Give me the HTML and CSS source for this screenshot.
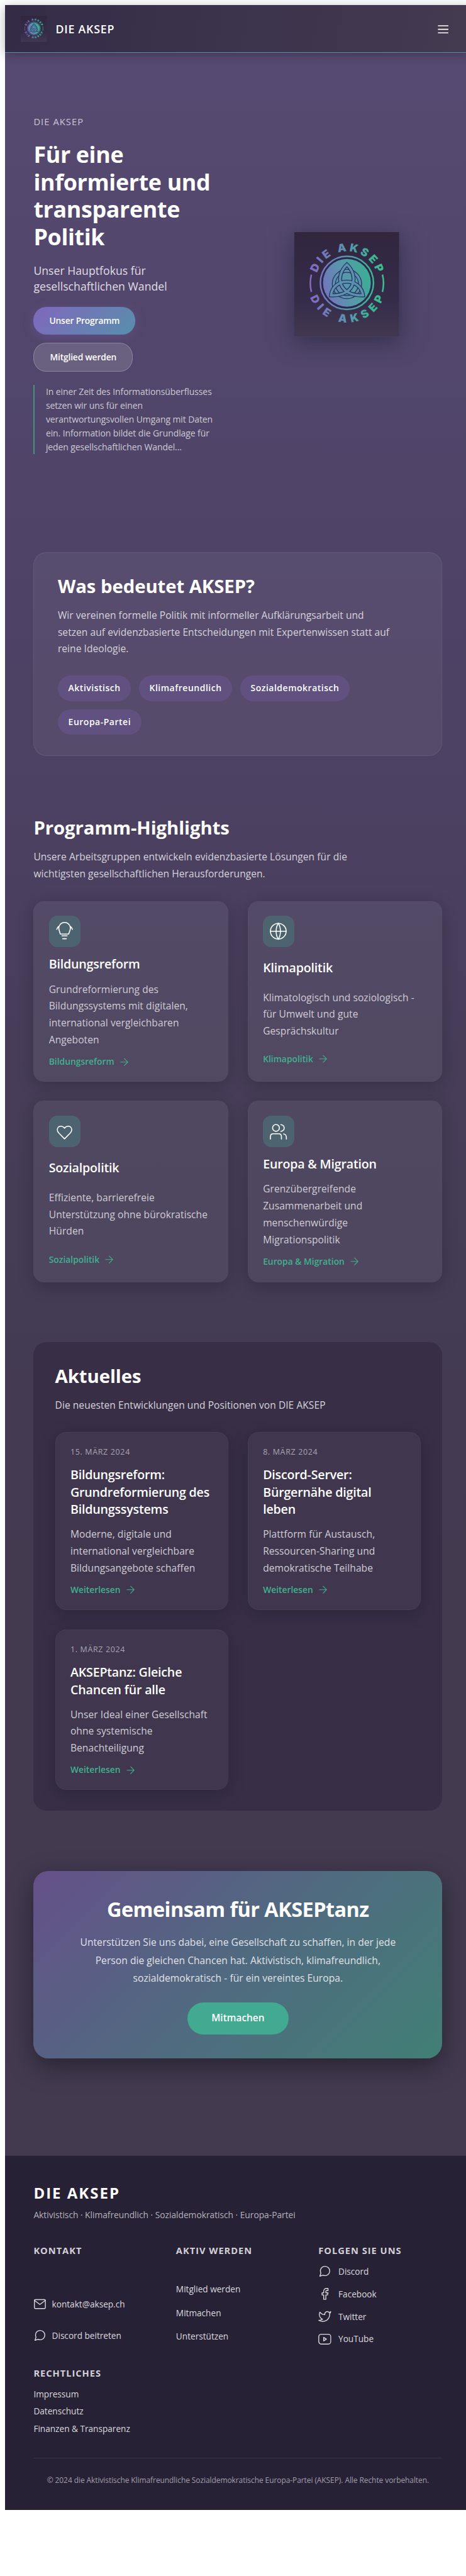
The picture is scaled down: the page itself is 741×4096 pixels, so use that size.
FILE: index.html
```html
<!DOCTYPE html>
<html lang="de">
<head>
<meta charset="utf-8">
<title>DIE AKSEP</title>
<link rel="stylesheet" href="styles.css">
</head>
<body>
<svg class="defs" aria-hidden="true">
  <defs>
    <linearGradient id="brand" gradientUnits="userSpaceOnUse" x1="30" y1="0" x2="170" y2="0">
      <stop offset="0" stop-color="#8569bf"/><stop offset=".5" stop-color="#5a93b0"/><stop offset=".85" stop-color="#3bb593"/><stop offset="1" stop-color="#3cc08f"/>
    </linearGradient>
    <linearGradient id="disc" gradientUnits="userSpaceOnUse" x1="54" y1="120" x2="148" y2="90">
      <stop offset="0" stop-color="#7571bf"/><stop offset=".5" stop-color="#5897ac"/><stop offset="1" stop-color="#3bae92"/>
    </linearGradient>
    <linearGradient id="logo-bg" x1="0" y1="0" x2="0" y2="1">
      <stop offset="0" stop-color="#31263e"/><stop offset=".65" stop-color="#352c4a"/><stop offset="1" stop-color="#423851"/>
    </linearGradient>
    <path id="arc-bottom" d="M24.8 96.7a75.5 75.5 0 0 0 151 0"/>
    <path id="arc-upper" d="M43.9 117.2A60 60 0 1 1 156.7 117.2"/>
    <symbol id="logo" viewBox="0 0 200 200">
      <rect width="200" height="200" fill="url(#logo-bg)"/>
      <circle cx="100.3" cy="96.7" r="50.6" fill="#2a2a4c" stroke="url(#brand)" stroke-width="3"/>
      <circle cx="100.3" cy="96.7" r="45.6" fill="url(#disc)"/>
      <path d="M32.5 81a69.5 69.5 0 0 0 0 33M168 81a69.5 69.5 0 0 1 0 33" fill="none" stroke="url(#brand)" stroke-width="3"/>
      <g fill="none" stroke-linejoin="miter">
        <circle cx="100.3" cy="99" r="25" stroke="#273358" stroke-width="7.5"/>
        <circle cx="100.3" cy="99" r="25" stroke="#5a90b0" stroke-width="4.5"/>
        <path d="M100.3 62C122 82 118 122 70 120.5C74 86 126 86 131 120.5C82 122 78 82 100.3 62Z" stroke="#273358" stroke-width="7.5"/>
        <path d="M100.3 62C122 82 118 122 70 120.5C74 86 126 86 131 120.5C82 122 78 82 100.3 62Z" stroke="#5a90b0" stroke-width="4.5"/>
      </g>
      <g class="logo-text" fill="url(#brand)">
        <text><textPath href="#arc-upper" startOffset="50%" text-anchor="middle" textLength="150">DIE AKSEP</textPath></text>
        <text><textPath href="#arc-bottom" startOffset="50%" text-anchor="middle" textLength="180">DIE AKSEP</textPath></text>
      </g>
    </symbol>
    <symbol id="arrow" viewBox="0 0 16 16"><path d="M.7 8h14M7.7 1l7 7-7 7"/></symbol>
    <symbol id="chat" viewBox="0 0 24 24"><path d="M21 11.5a8.4 8.4 0 0 1-.9 3.800 8.5 8.5 0 0 1-7.6 4.7 8.4 8.4 0 0 1-3.8-.9L3 21l1.9-5.7a8.4 8.4 0 0 1-.9-3.800 8.5 8.5 0 0 1 4.7-7.6 8.4 8.4 0 0 1 3.800-.9h.5a8.5 8.5 0 0 1 8 8v.5z"/></symbol>
    <symbol id="mail" viewBox="0 0 24 24"><rect x="2" y="4" width="20" height="16.5" rx="1.8"/><path d="M2 5.5l10 7.5 10-7.5"/></symbol>
    <symbol id="facebook" viewBox="0 0 24 24"><path d="M18 2h-3a5 5 0 0 0-5 5v3H7v4h3v8h4v-8h3l1-4h-4V7a1 1 0 0 1 1-1h3z"/></symbol>
    <symbol id="twitter" viewBox="0 0 24 24"><path d="M23 3a10.900 10.900 0 0 1-3.140 1.530 4.480 4.480 0 0 0-7.860 3v1A10.660 10.660 0 0 1 3 4s-4 9 5 13a11.640 11.640 0 0 1-7 2c9 5 20 0 20-11.500a4.500 4.500 0 0 0-.08-.83A7.720 7.720 0 0 0 23 3z"/></symbol>
    <symbol id="youtube" viewBox="0 0 24 24"><rect x="1" y="3" width="22" height="18" rx="4.5"/><path d="M10 8.8l5 3.2-5 3.2z"/></symbol>
  </defs>
</svg>

<div class="page">
  <header class="topbar">
    <a class="topbar-brand"><svg class="topbar-logo"><use href="#logo"/></svg><span>DIE AKSEP</span></a>
    <svg class="menu-icon" viewBox="0 0 21 16"><path d="M.5 1.2h20M.5 8h20M.5 14.8h20"/></svg>
  </header>

  <main class="main">
    <section class="hero">
      <div class="hero-copy">
        <p class="eyebrow">DIE AKSEP</p>
        <h1>Für eine<br>informierte und<br>transparente<br>Politik</h1>
        <p class="hero-sub">Unser Hauptfokus für<br>gesellschaftlichen Wandel</p>
        <div class="hero-actions">
          <a class="btn btn-primary">Unser Programm</a>
          <a class="btn btn-ghost">Mitglied werden</a>
        </div>
        <blockquote>In einer Zeit des Informationsüberflusses<br>setzen wir uns für einen<br>verantwortungsvollen Umgang mit Daten<br>ein. Information bildet die Grundlage für<br>jeden gesellschaftlichen Wandel...</blockquote>
      </div>
      <svg class="hero-logo"><use href="#logo"/></svg>
    </section>

    <section class="about">
      <h2>Was bedeutet AKSEP?</h2>
      <p class="lead">Wir vereinen formelle Politik mit informeller Aufklärungsarbeit und<br>setzen auf evidenzbasierte Entscheidungen mit Expertenwissen statt auf<br>reine Ideologie.</p>
      <ul class="tags"><li>Aktivistisch</li><li>Klimafreundlich</li><li>Sozialdemokratisch</li><li>Europa-Partei</li></ul>
    </section>

    <section class="highlights">
      <h2>Programm-Highlights</h2>
      <p class="lead">Unsere Arbeitsgruppen entwickeln evidenzbasierte Lösungen für die<br>wichtigsten gesellschaftlichen Herausforderungen.</p>
      <div class="card-grid topics">
        <article class="card">
          <svg class="topic-icon" viewBox="0 0 60 60"><path d="M21.5 35L19.2 27.5A11 11 0 1 1 40 27.5L37.3 35zM24.5 38.3h10M26 43.9h7M19 20q-3 1.5-4.3 6M40 20q3 1.5 4.6 6"/></svg>
          <h3>Bildungsreform</h3>
          <p>Grundreformierung des<br>Bildungssystems mit digitalen,<br>international vergleichbaren<br>Angeboten</p>
          <a class="more">Bildungsreform<svg><use href="#arrow"/></svg></a>
        </article>
        <article class="card">
          <svg class="topic-icon" viewBox="0 0 60 60"><circle cx="29.4" cy="29.6" r="15"/><path d="M14.4 29.6h30M29.4 14.6c-5.5 8.5-5.5 21.5 0 30.5c5.5-9 5.5-22 0-30.5"/></svg>
          <h3>Klimapolitik</h3>
          <p>Klimatologisch und soziologisch -<br>für Umwelt und gute<br>Gesprächskultur</p>
          <a class="more">Klimapolitik<svg><use href="#arrow"/></svg></a>
        </article>
        <article class="card">
          <svg class="topic-icon" viewBox="0 0 60 60"><path d="M29.5 44.2L18.5 33C13.5 27.5 16 20 22.5 20C26 20 28 21.5 29.5 24C31 21.5 33 20 36.5 20C43 20 45.5 27.5 40.5 33z"/></svg>
          <h3>Sozialpolitik</h3>
          <p>Effiziente, barrierefreie<br>Unterstützung ohne bürokratische<br>Hürden</p>
          <a class="more">Sozialpolitik<svg><use href="#arrow"/></svg></a>
        </article>
        <article class="card">
          <svg class="topic-icon" viewBox="0 0 60 60"><circle cx="25" cy="23.3" r="6.5"/><path d="M14.4 44.7V40q0-5.5 5.5-5.5h10q5.5 0 5.5 5.5v4.7M34.3 17c8.5 1.5 8.5 11.5 0 13M39.5 34.7q5.3 1 5.3 7v3"/></svg>
          <h3>Europa &amp; Migration</h3>
          <p>Grenzübergreifende<br>Zusammenarbeit und<br>menschenwürdige<br>Migrationspolitik</p>
          <a class="more">Europa &amp; Migration<svg><use href="#arrow"/></svg></a>
        </article>
      </div>
    </section>

    <section class="news">
      <h2>Aktuelles</h2>
      <p class="lead">Die neuesten Entwicklungen und Positionen von DIE AKSEP</p>
      <div class="card-grid">
        <article class="card">
          <time>15. MÄRZ 2024</time>
          <h3>Bildungsreform:<br>Grundreformierung des<br>Bildungssystems</h3>
          <p>Moderne, digitale und<br>international vergleichbare<br>Bildungsangebote schaffen</p>
          <a class="more">Weiterlesen<svg><use href="#arrow"/></svg></a>
        </article>
        <article class="card">
          <time>8. MÄRZ 2024</time>
          <h3>Discord-Server:<br>Bürgernähe digital<br>leben</h3>
          <p>Plattform für Austausch,<br>Ressourcen-Sharing und<br>demokratische Teilhabe</p>
          <a class="more">Weiterlesen<svg><use href="#arrow"/></svg></a>
        </article>
        <article class="card">
          <time>1. MÄRZ 2024</time>
          <h3>AKSEPtanz: Gleiche<br>Chancen für alle</h3>
          <p>Unser Ideal einer Gesellschaft<br>ohne systemische<br>Benachteiligung</p>
          <a class="more">Weiterlesen<svg><use href="#arrow"/></svg></a>
        </article>
      </div>
    </section>

    <section class="cta">
      <h2>Gemeinsam für AKSEPtanz</h2>
      <p>Unterstützen Sie uns dabei, eine Gesellschaft zu schaffen, in der jede<br>Person die gleichen Chancen hat. Aktivistisch, klimafreundlich,<br>sozialdemokratisch - für ein vereintes Europa.</p>
      <a class="cta-btn">Mitmachen</a>
    </section>
  </main>

  <footer class="footer">
    <p class="footer-brand">DIE AKSEP</p>
    <p class="footer-tagline">Aktivistisch · Klimafreundlich · Sozialdemokratisch · Europa-Partei</p>
    <div class="footer-cols">
      <div>
        <h4>KONTAKT</h4>
        <ul class="links contact">
          <li><svg><use href="#mail"/></svg>kontakt@aksep.ch</li>
          <li><svg><use href="#chat"/></svg>Discord beitreten</li>
        </ul>
      </div>
      <div>
        <h4>AKTIV WERDEN</h4>
        <ul class="links active"><li>Mitglied werden</li><li>Mitmachen</li><li>Unterstützen</li></ul>
      </div>
      <div>
        <h4>FOLGEN SIE UNS</h4>
        <ul class="links social">
          <li><svg><use href="#chat"/></svg>Discord</li>
          <li><svg><use href="#facebook"/></svg>Facebook</li>
          <li><svg><use href="#twitter"/></svg>Twitter</li>
          <li><svg><use href="#youtube"/></svg>YouTube</li>
        </ul>
      </div>
      <div>
        <h4>RECHTLICHES</h4>
        <ul class="links legal"><li>Impressum</li><li>Datenschutz</li><li>Finanzen &amp; Transparenz</li></ul>
      </div>
    </div>
    <p class="copyright">© 2024 die Aktivistische Klimafreundliche Sozialdemokratische Europa-Partei (AKSEP). Alle Rechte vorbehalten.</p>
  </footer>
</div>
</body>
</html>
```
FILE: styles.css
```css
* { box-sizing: border-box; margin: 0; padding: 0; }
html { background: #fff; }
body { overflow: hidden; height: 4096px; font-family: "Open Sans", "Noto Sans", sans-serif; color: #fff; }
ul { list-style: none; }
.defs { position: absolute; width: 0; height: 0; }

.page { zoom: 0.8343; width: 887px; margin: 10px 0 0 10px; }

/* header */
.topbar {
  position: relative; z-index: 1; height: 91px; padding: 0 42px 0 30px;
  display: flex; align-items: center; justify-content: space-between;
  background: linear-gradient(100deg, #342b47, #443b51);
  border-bottom: 1px solid #5090a8;
  box-shadow: 0 4px 20px rgba(0, 0, 0, .3);
}
.topbar-brand { display: flex; align-items: center; gap: 16px; font-size: 21.4px; font-weight: 600; letter-spacing: .042em; }
.topbar-brand span { padding-top: 1px; }
.topbar-logo { width: 50px; height: 50px; }
.menu-icon { width: 21px; height: 16px; margin-top: 1px; fill: none; stroke: #fff; stroke-width: 2; }
.logo-text { font: 900 21px Inter, "Open Sans", sans-serif; }

.main {
  padding: 118px 54px 185px;
  background: linear-gradient(#574a72 0, #53476d 400px, #4f4468 900px, #4c4162 1400px, #473d59 1900px, #443b54 2400px, #433a50 2900px);
}
h2 { font-size: 35.2px; line-height: 42px; font-weight: 700; letter-spacing: -.003em; }
h3 { font-size: 23.6px; line-height: 33px; font-weight: 600; letter-spacing: -.011em; }
.lead { margin-top: 18px; font-size: 18.7px; line-height: 32px; letter-spacing: .002em; color: #d6d3db; }

/* hero */
.hero { display: grid; grid-template-columns: 363px 363px; gap: 53px; align-items: center; margin-bottom: 187px; }
.hero-logo { width: 200px; height: 200px; justify-self: center; box-shadow: 0 10px 40px rgba(20, 25, 45, .5); }
.eyebrow { font-size: 17.6px; line-height: 24px; letter-spacing: .074em; color: #cdc8d5; }
h1 { margin-top: 26px; font-size: 43px; line-height: 52px; letter-spacing: -.01em; white-space: nowrap; }
.hero-sub { margin-top: 24px; font-size: 21.2px; line-height: 30px; color: #e0dde5; }
.hero-actions { margin-top: 24px; display: flex; flex-direction: column; align-items: flex-start; gap: 15px; }
.btn { padding: 0 30px; border-radius: 25px; font-size: 16.6px; font-weight: 600; letter-spacing: -.012em; line-height: 53px; }
.btn-primary { background: linear-gradient(135deg, #8067bd, #588fab); box-shadow: 0 4px 20px rgba(128, 103, 189, .3); }
.btn-ghost { background: rgba(255, 255, 255, .14); border: 1px solid rgba(255, 255, 255, .22); }
blockquote { margin-top: 25px; padding-left: 21px; border-left: 3px solid #45927f; font-size: 16.8px; line-height: 26.4px; letter-spacing: -.007em; color: #cdc9d3; white-space: nowrap; }

/* about */
.about { height: 388px; padding: 43px 45px 0; border: 1px solid rgba(255, 255, 255, .07); border-radius: 25px; background: rgba(255, 255, 255, .05); white-space: nowrap; }
.tags { margin-top: 35px; display: flex; flex-wrap: wrap; gap: 15px; }
.tags li { padding: 0 20px; border-radius: 25px; background: #605180; font-size: 16.8px; font-weight: 600; line-height: 49px; letter-spacing: .036em; }

/* cards */
.highlights { margin-top: 117px; }
.card-grid { margin-top: 36px; display: grid; grid-template-columns: 1fr 1fr; gap: 36.3px 37px; }
.card {
  display: grid; align-content: stretch; row-gap: 15px; padding: 27px 28px; white-space: nowrap;
  border: 1px solid rgba(255, 255, 255, .07); border-radius: 20px;
  background: rgba(255, 255, 255, .06) padding-box;
  box-shadow: 0 8px 32px rgba(0, 0, 0, .2);
}
.card p { font-size: 18.7px; line-height: 32px; letter-spacing: .003em; color: #d0ccd6; }
.topics { grid-template-rows: 344.4px 345.7px; }
.topics h3 { line-height: 34px; }
.topic-icon { width: 60px; height: 60px; border-radius: 16px; background: #4d6470; fill: none; stroke: #fff; stroke-width: 1.9; stroke-linecap: round; stroke-linejoin: round; }
.more { align-self: center; display: flex; align-items: center; gap: 11px; font-size: 16.6px; line-height: 22px; font-weight: 600; color: #40b18f; }
.more svg { width: 16px; height: 16px; fill: none; stroke: currentColor; stroke-width: 1.3; }

/* news */
.news { height: 893px; margin-top: 114.3px; padding: 44px 41px 0; border-radius: 25px; background: #382f47; }
.news .card-grid { margin-top: 35px; grid-template-rows: 340px 306px; }
.news .card { background: #40374e; border-color: #473e55; }
time { font-size: 15px; line-height: 22px; letter-spacing: .051em; color: #a9a4b2; }

/* call to action */
.cta {
  height: 357px; margin-top: 115px; padding-top: 49px; border-radius: 29px; text-align: center;
  background: linear-gradient(135deg, #655089, #506a80 50%, #417f75);
  box-shadow: 0 15px 50px rgba(0, 0, 0, .4);
}
.cta h2 { font-size: 39px; line-height: 48px; letter-spacing: -.018em; }
.cta p { margin: 22px 0 29px; font-size: 18.8px; line-height: 34px; color: #e0e2e7; }
.cta-btn { display: inline-block; width: 193px; border-radius: 31px; background: #41aa91; font-size: 18.5px; font-weight: 600; line-height: 61px; }

/* footer */
.footer { height: 676px; padding: 52.5px 54px 0; border-top: 1px solid #3a334c; background: #272136; }
.footer-brand { font-size: 28.8px; font-weight: 700; line-height: 36px; letter-spacing: .083em; }
.footer-tagline { margin-top: 10px; font-size: 16.6px; line-height: 28px; letter-spacing: -.003em; color: #b5b2ba; }
.footer-cols { margin-top: 40px; display: grid; grid-template-columns: repeat(3, 235px); gap: 29px 36.5px; }
h4 { font-size: 17.6px; line-height: 28px; letter-spacing: .066em; color: #d3d1d6; }
.links { font-size: 16.4px; color: #dbd9de; }
.links li { display: flex; align-items: center; gap: 13px; letter-spacing: -.002em; }
.links svg { width: 25px; height: 25px; fill: none; stroke: #dbd9de; stroke-width: 1.6; stroke-linecap: round; stroke-linejoin: round; }
.contact { padding-top: 57px; }
.contact li { height: 60px; gap: 11px; }
.contact svg { margin-left: -1px; }
.active { padding-top: 36.5px; }
.active li { height: 45px; }
.social { padding-top: 3.5px; }
.social li { height: 43px; }
.legal { padding-top: 8px; }
.legal li { height: 33px; }
.copyright { margin-top: 40px; padding-top: 29px; border-top: 1px solid #37304a; text-align: center; font-size: 14.4px; line-height: 24px; letter-spacing: -.007em; color: #a19eaa; white-space: nowrap; }
```
